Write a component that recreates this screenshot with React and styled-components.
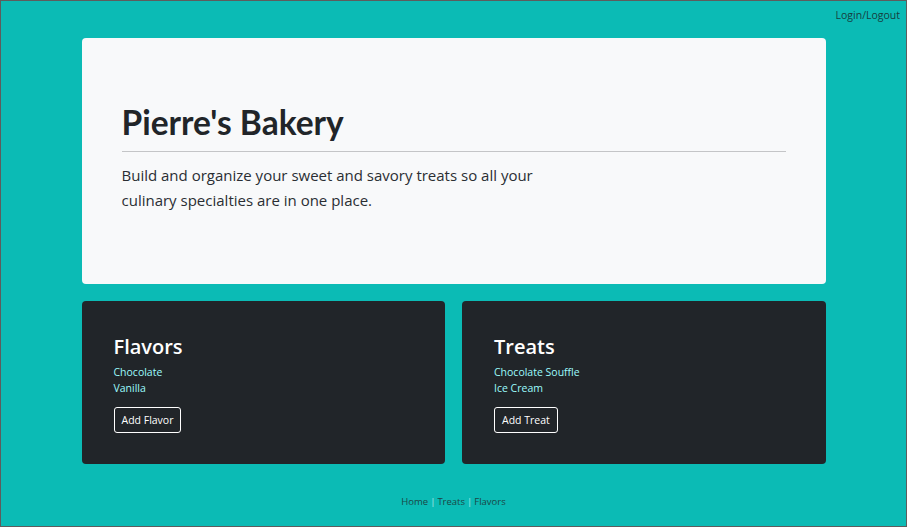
import React from 'react';
import styled, { createGlobalStyle } from 'styled-components';

const GlobalStyle = createGlobalStyle`
  html, body {
    margin: 0;
    padding: 0;
  }
  body {
    font-family: 'Open Sans', 'Liberation Sans', sans-serif;
    color: #212529;
  }
  * {
    box-sizing: border-box;
  }
`;

const Page = styled.div`
  min-height: 100vh;
  background-color: #0bbbb5;
  border: 1px solid #5d5d5d;
  display: flex;
  flex-direction: column;
`;

const TopBar = styled.div`
  height: 37px;
  display: flex;
  justify-content: flex-end;
  padding: 7px 6px 0 0;
  > a {
    font-size: 10.5px;
    color: #16403f;
    text-decoration: none;
  }
`;

const Container = styled.div`
  width: 744px;
  margin: 0 auto;
`;

const Jumbotron = styled.div`
  background-color: #f8f9fa;
  border-radius: 4px;
  padding: 63px 40px 71px 40px;
  height: 246px;
  > h1 {
    font-family: 'Lato', 'Open Sans', sans-serif;
    font-size: 33.5px;
    font-weight: 700;
    line-height: 42px;
    margin: 0 0 8px 0;
    color: #212529;
  }
  > hr {
    border: none;
    border-top: 1px solid #c4c5c7;
    margin: 0 0 11px 0;
  }
  > p {
    font-size: 15px;
    line-height: 25px;
    max-width: 430px;
    margin: 0;
    color: #2a2e33;
  }
`;

const CardRow = styled.div`
  display: grid;
  grid-template-columns: 1fr 1fr;
  gap: 17px;
  margin-top: 17px;
`;

const Card = styled.div`
  background-color: #212529;
  border-radius: 4px;
  height: 163px;
  padding: 33px 32px 32px 32px;
  > h2 {
    color: #ffffff;
    font-size: 20px;
    font-weight: 600;
    line-height: 26px;
    margin: 0 0 4px 0;
  }
`;

const ItemList = styled.ul`
  list-style: none;
  padding: 0;
  margin: 0 0 11px 0;
  > li {
    font-size: 10.5px;
    line-height: 16px;
    color: #9cfbfd;
  }
`;

const AddButton = styled.button`
  font-family: inherit;
  font-size: 10.5px;
  color: #ffffff;
  background: transparent;
  border: 1px solid #ffffff;
  border-radius: 3px;
  height: 26px;
  padding: 0 7px;
  cursor: pointer;
`;

const Footer = styled.div`
  text-align: center;
  margin-top: 31px;
  font-size: 9.5px;
  color: #1c4645;
  > span {
    color: #b8e6e4;
    margin: 0 2px;
  }
`;

const sections = [
  { title: 'Flavors', items: ['Chocolate', 'Vanilla'], button: 'Add Flavor' },
  { title: 'Treats', items: ['Chocolate Souffle', 'Ice Cream'], button: 'Add Treat' },
];

export default function App() {
  return (
    <Page>
      <GlobalStyle />
      <TopBar>
        <a href="#">Login/Logout</a>
      </TopBar>
      <Container>
        <Jumbotron>
          <h1>Pierre's Bakery</h1>
          <hr />
          <p>
            Build and organize your sweet and savory treats so all your culinary
            specialties are in one place.
          </p>
        </Jumbotron>
        <CardRow>
          {sections.map((s) => (
            <Card key={s.title}>
              <h2>{s.title}</h2>
              <ItemList>
                {s.items.map((item) => (
                  <li key={item}>{item}</li>
                ))}
              </ItemList>
              <AddButton>{s.button}</AddButton>
            </Card>
          ))}
        </CardRow>
        <Footer>
          Home<span>|</span>Treats<span>|</span>Flavors
        </Footer>
      </Container>
    </Page>
  );
}
